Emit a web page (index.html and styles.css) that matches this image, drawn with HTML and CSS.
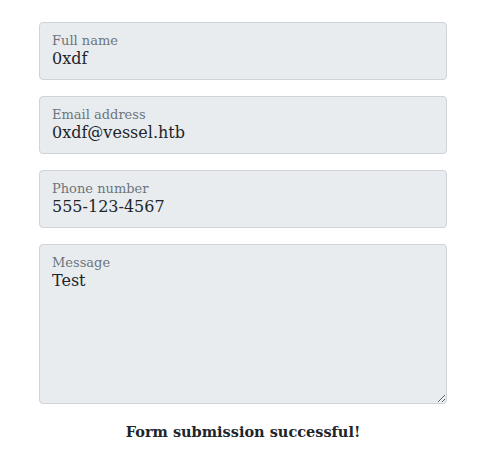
FILE: index.html
```html
<!DOCTYPE html>
<html>
<head>
<meta charset="utf-8">
<link rel="stylesheet" href="styles.css">
</head>
<body>
<form class="form">
  <div class="field">
    <label class="label">Full name</label>
    <div class="value">0xdf</div>
  </div>
  <div class="field">
    <label class="label">Email address</label>
    <div class="value">0xdf@vessel.htb</div>
  </div>
  <div class="field">
    <label class="label">Phone number</label>
    <div class="value">555-123-4567</div>
  </div>
  <div class="field field-message">
    <label class="label">Message</label>
    <textarea class="textarea" readonly>Test</textarea>
  </div>
  <p class="status">Form submission successful!</p>
</form>
</body>
</html>
```
FILE: styles.css
```css
html, body {
  margin: 0;
  padding: 0;
  background: #ffffff;
}
body {
  font-family: "DejaVu Serif", "Liberation Serif", serif;
}
.form {
  width: 408px;
  margin: 22px 0 0 39px;
  display: flex;
  flex-direction: column;
  gap: 16px;
}
.field {
  box-sizing: border-box;
  height: 58px;
  background: #e9ecef;
  border: 1px solid #ced4da;
  border-radius: 4px;
  padding: 9px 12px 0 12px;
  display: flex;
  flex-direction: column;
}
.label {
  font-size: 13px;
  line-height: 17px;
  color: #6c757d;
}
.value {
  font-size: 16px;
  line-height: 20px;
  color: #212529;
}
.field-message {
  height: 160px;
  padding-right: 0;
  padding-bottom: 0;
}
.textarea {
  flex: 1;
  margin: 0;
  padding: 0;
  border: none;
  outline: none;
  background: transparent;
  font-family: inherit;
  font-size: 16px;
  line-height: 20px;
  color: #212529;
  resize: vertical;
}
.status {
  margin: 3px 0 0 0;
  text-align: center;
  font-weight: bold;
  font-size: 14.5px;
  line-height: 18px;
  color: #212529;
}
```
